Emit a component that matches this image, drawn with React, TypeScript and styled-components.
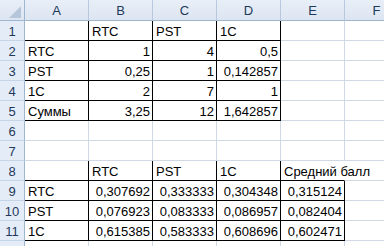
import styled, { createGlobalStyle } from "styled-components";

const GlobalStyle = createGlobalStyle`
  html,
  body {
    margin: 0;
    padding: 0;
    background: #ffffff;
    overflow: hidden;
  }
`;

const COLUMNS = ["A", "B", "C", "D", "E", "F"];

type Row = string[];

const rows: Row[] = [
  ["", "RTC", "PST", "1C"],
  ["RTC", "1", "4", "0,5"],
  ["PST", "0,25", "1", "0,142857"],
  ["1C", "2", "7", "1"],
  ["Суммы", "3,25", "12", "1,642857"],
  [],
  [],
  ["", "RTC", "PST", "1C", "Средний балл"],
  ["RTC", "0,307692", "0,333333", "0,304348", "0,315124"],
  ["PST", "0,076923", "0,083333", "0,086957", "0,082404"],
  ["1C", "0,615385", "0,583333", "0,608696", "0,602471"],
];

// ranges with thin black borders: [firstRow, lastRow, lastCol] (1-based rows, 0-based cols)
const ranges = [
  [1, 5, 3],
  [8, 11, 4],
];

const isBoxed = (row: number, col: number) =>
  ranges.some(([from, to, last]) => row >= from && row <= to && col <= last);

const isNumber = (value: string) => /^[\d,]+$/.test(value);

const Spreadsheet = () => {
  return (
    <Viewport>
      <Sheet>
        <Corner>
          <svg width="12" height="12" viewBox="0 0 12 12">
            <polygon points="12,0 12,12 0,12" fill="#b6c6da" />
          </svg>
        </Corner>
        {COLUMNS.map((letter) => (
          <ColumnHeader key={letter}>{letter}</ColumnHeader>
        ))}

        {rows.map((cells, r) => {
          const rowNumber = r + 1;
          return [
            <RowHeader key={`h${rowNumber}`}>{rowNumber}</RowHeader>,
            ...COLUMNS.map((_, c) => {
              const value = cells[c] ?? "";
              const spills = value.length > 8 && !isNumber(value);
              return (
                <Cell
                  key={`${rowNumber}-${c}`}
                  $boxed={isBoxed(rowNumber, c)}
                  $right={isNumber(value)}
                  $spill={spills}
                >
                  {value}
                </Cell>
              );
            }),
          ];
        })}

        {/* next row, only its top edge shows */}
        <RowHeader />
        {COLUMNS.map((letter) => (
          <Cell key={`tail-${letter}`} $boxed={false} $right={false} $spill={false} />
        ))}
      </Sheet>
    </Viewport>
  );
};

const Viewport = styled.div`
  width: 384px;
  height: 246px;
  overflow: hidden;
`;

const Sheet = styled.div`
  display: grid;
  grid-template-columns: 25px repeat(6, 64px);
  grid-template-rows: 21px;
  grid-auto-rows: 20px;

  width: 409px;

  font-family: "Liberation Sans", Arial, sans-serif;
  font-size: 13px;
  color: #000000;
`;

const Corner = styled.div`
  display: flex;
  justify-content: flex-end;
  align-items: flex-end;

  box-sizing: border-box;
  padding: 0 3px 2px 0;

  background: linear-gradient(#e9eff8, #dce5f1);
  border-right: 1px solid #9eb6ce;
  border-bottom: 1px solid #9eb6ce;
`;

const ColumnHeader = styled.div`
  box-sizing: border-box;
  padding-top: 3px;

  text-align: center;
  line-height: 15px;
  color: #1e395b;

  background: linear-gradient(#e9eff8, #dce5f1);
  border-right: 1px solid #b7c9de;
  border-bottom: 1px solid #9eb6ce;
`;

const RowHeader = styled.div`
  box-sizing: border-box;
  padding-top: 3px;

  text-align: center;
  line-height: 15px;
  color: #1e395b;

  background: #e4ecf7;
  border-right: 1px solid #9eb6ce;
  border-bottom: 1px solid #c5d4e6;
`;

const Cell = styled.div<{ $boxed: boolean; $right: boolean; $spill: boolean }>`
  box-sizing: border-box;
  padding: 3px 2px 0 3px;

  line-height: 15px;
  white-space: nowrap;
  text-align: ${({ $right }) => ($right ? "right" : "left")};

  border-right: 1px solid
    ${({ $boxed, $spill }) => ($spill ? "transparent" : $boxed ? "#000000" : "#d0d7e5")};
  border-bottom: 1px solid ${({ $boxed }) => ($boxed ? "#000000" : "#d0d7e5")};
`;

export default function App() {
  return (
    <>
      <GlobalStyle />
      <Spreadsheet />
    </>
  );
}
